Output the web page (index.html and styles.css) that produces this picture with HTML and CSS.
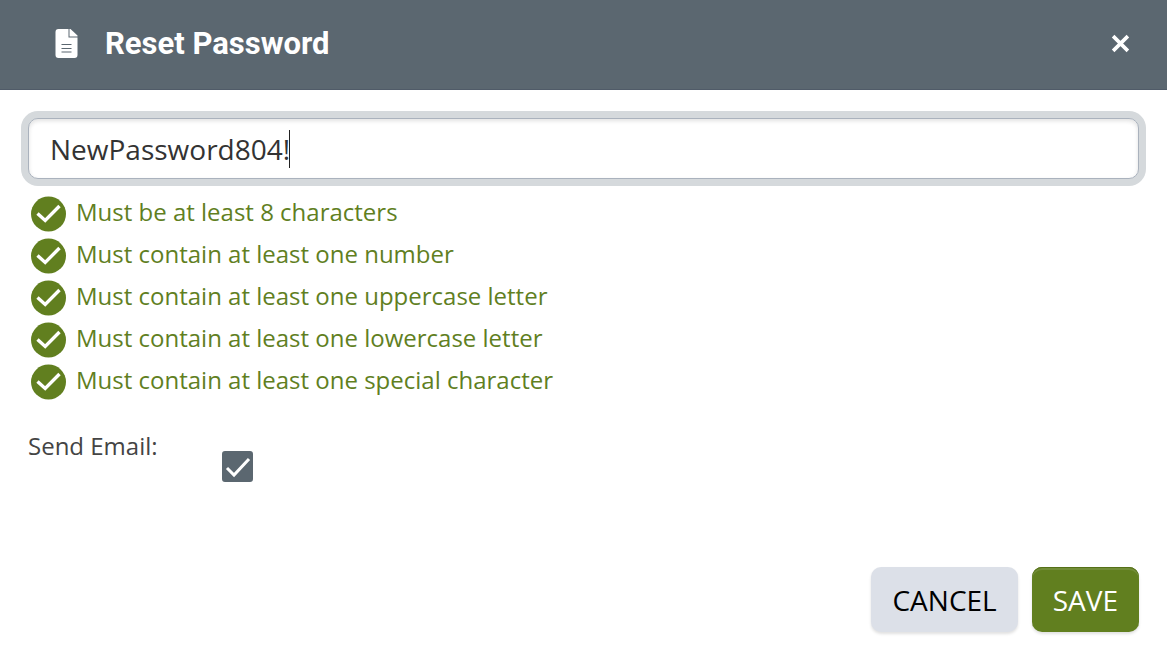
FILE: index.html
```html
<!DOCTYPE html>
<html lang="en">
<head>
    <meta charset="UTF-8">
    <meta name="viewport" content="width=device-width, initial-scale=1.0">
    <title>Reset Password</title>
    <link rel="stylesheet" href="styles.css">
</head>
<body>
    <!-- Shared icons -->
    <svg class="sprite" aria-hidden="true">
        <symbol id="icon-check" viewBox="0 0 36 36">
            <circle cx="17.5" cy="18" r="17.5" fill="#617f1f"/>
            <path d="M6.500 17.500l7.700 7L28.500 10" fill="none" stroke="#fff" stroke-width="3.400"/>
        </symbol>
    </svg>

    <form class="modal" onsubmit="return false;">
        <header class="modal-header">
            <svg class="title-icon" viewBox="0 0 22 29" aria-hidden="true">
                <path fill="#fff" d="M3 0h10v8.500h9V26a3 3 0 0 1-3 3H3a3 3 0 0 1-3-3V3a3 3 0 0 1 3-3z"/>
                <path fill="#fff" d="M14 0h1l7 6.500v1h-8z"/>
                <path stroke="#5b6770" stroke-width="1.200" d="M6 15.500h10M6 19.500h10M6 23h10"/>
            </svg>
            <h1>Reset Password</h1>
            <button type="button" class="close-btn" aria-label="Close">
                <svg viewBox="0 0 18 18" aria-hidden="true">
                    <path d="M2 2l14 14M16 2L2 16" stroke="#fff" stroke-width="3.400"/>
                </svg>
            </button>
        </header>

        <div class="modal-body">
            <div class="password-field">
                <input type="text" id="password" class="password-input" value="NewPassword804!" aria-label="New password" autocomplete="off">
                <span class="caret" aria-hidden="true"></span>
            </div>

            <ul class="rules">
                <li><svg aria-hidden="true"><use href="#icon-check"/></svg>Must be at least 8 characters</li>
                <li><svg aria-hidden="true"><use href="#icon-check"/></svg>Must contain at least one number</li>
                <li><svg aria-hidden="true"><use href="#icon-check"/></svg>Must contain at least one uppercase letter</li>
                <li><svg aria-hidden="true"><use href="#icon-check"/></svg>Must contain at least one lowercase letter</li>
                <li><svg aria-hidden="true"><use href="#icon-check"/></svg>Must contain at least one special character</li>
            </ul>

            <div class="email-row">
                <label for="sendEmail">Send Email:</label>
                <input type="checkbox" id="sendEmail" checked>
            </div>
        </div>

        <footer class="modal-footer">
            <button type="button" class="btn btn-cancel">CANCEL</button>
            <button type="submit" class="btn btn-save">SAVE</button>
        </footer>
    </form>

    <script>
        const password = document.getElementById('password');
        const caret = document.querySelector('.caret');

        // The drawn caret only stands for the initial cursor position
        password.addEventListener('input', () => {
            caret.hidden = true;
            password.classList.add('edited');
        });

        password.focus();
        password.setSelectionRange(password.value.length, password.value.length);
    </script>
</body>
</html>
```
FILE: styles.css
```css
* {
    box-sizing: border-box;
}

body {
    margin: 0;
    background: #fff;
    color: #444;
    font-family: 'Open Sans', sans-serif;
    font-size: 24px;
}

.sprite {
    display: none;
}

.modal {
    display: flex;
    flex-direction: column;
    min-height: 100vh;
}

/* Header */
.modal-header {
    display: flex;
    align-items: center;
    height: 90px;
    padding: 0 35px 2px 55px;
    background: #5b6770;
    border-bottom: 1px solid #505b68;
}

.title-icon {
    width: 23px;
    height: 29px;
    margin-right: 27px;
}

h1 {
    flex: 1;
    margin: 0;
    color: #fff;
    font-family: Roboto, sans-serif;
    font-size: 31px;
    font-weight: 700;
    line-height: 41px;
}

.close-btn {
    display: flex;
    padding: 2px;
    background: none;
    border: none;
    cursor: pointer;
}

.close-btn svg {
    width: 19px;
    height: 19px;
}

/* Body */
.modal-body {
    flex: 1;
    padding: 28px;
}

.password-field {
    position: relative;
}

.password-input {
    display: block;
    width: 100%;
    height: 61px;
    padding: 0 21px;
    background: #fff;
    border: 1px solid #aab2bd;
    border-radius: 10px;
    color: #333;
    caret-color: transparent;
    font-family: inherit;
    font-size: 28px;
}

.password-input.edited {
    caret-color: #333;
}

.password-input:focus {
    outline: none;
    box-shadow: inset 0 2px 4px rgba(0, 0, 0, 0.12), 0 0 0 7px #d5d9dc;
}

.caret {
    position: absolute;
    top: 12px;
    left: 261px;
    width: 1px;
    height: 38px;
    background: #222;
}

.caret[hidden] {
    display: none;
}

.rules {
    margin: 13px 0 0;
    padding: 0;
    list-style: none;
    color: #617f1f;
}

.rules li {
    display: flex;
    gap: 9px;
    height: 42px;
    padding-left: 3px;
    line-height: 40px;
}

.rules svg {
    width: 36px;
    height: 36px;
    margin-top: 4px;
}

.email-row {
    display: flex;
    gap: 64px;
    margin-top: 24px;
    line-height: 40px;
}

.email-row input {
    appearance: none;
    width: 31px;
    height: 31px;
    margin: 25px 0 0;
    border: 2px solid #5b6770;
    border-radius: 3px;
}

.email-row input:checked {
    background: #5b6770 url("data:image/svg+xml,%3Csvg xmlns='http://www.w3.org/2000/svg' viewBox='0 0 31 31'%3E%3Cpath d='M5 17l7 7L27 8' fill='none' stroke='%23fff' stroke-width='3'/%3E%3C/svg%3E") center / 31px 31px no-repeat;
}

/* Footer */
.modal-footer {
    display: flex;
    justify-content: flex-end;
    gap: 14px;
    padding: 0 28px 25px;
}

.btn {
    height: 65px;
    padding: 0 21px;
    border: none;
    border-radius: 10px;
    font-family: inherit;
    font-size: 28px;
    cursor: pointer;
}

.btn-cancel {
    background: #dce0e8;
    box-shadow: 0 2px 3px rgba(0, 0, 0, 0.12);
    color: #000;
}

.btn-save {
    background: #617f1f;
    box-shadow: inset 0 1px 0 #557018, inset 0 3px 0 #728d38, 0 2px 3px rgba(0, 0, 0, 0.12);
    color: #fff;
}
```
